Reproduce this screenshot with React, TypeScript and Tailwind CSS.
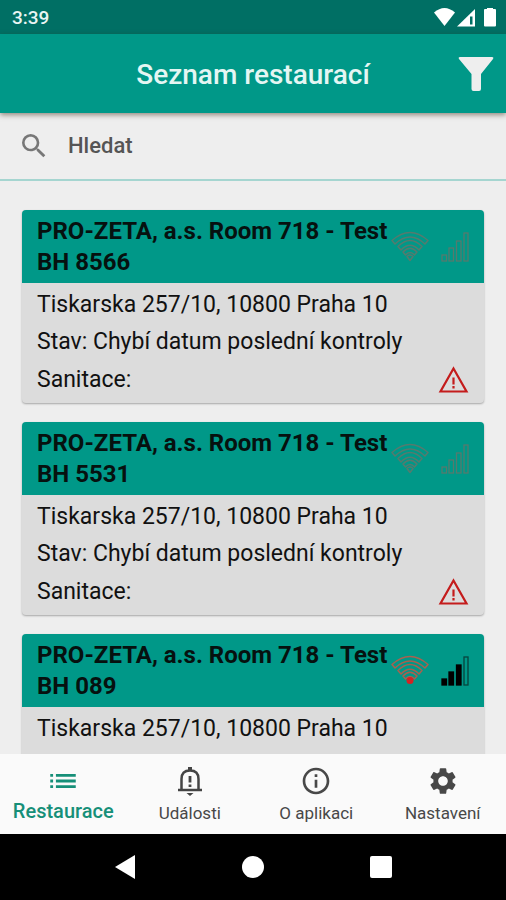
import type { ReactNode } from "react";
import { MdInfoOutline, MdList, MdSearch, MdSettings } from "react-icons/md";

type Restaurant = {
  id: string;
  name: string;
  address: string;
  status: string;
  online: boolean;
};

const restaurants: Restaurant[] = [
  { id: "8566", online: false },
  { id: "5531", online: false },
  { id: "089", online: true },
].map((r) => ({
  ...r,
  name: `PRO-ZETA, a.s. Room 718 - Test BH ${r.id}`,
  address: "Tiskarska 257/10, 10800 Praha 10",
  status: "Chybí datum poslední kontroly",
}));

function StatusBar() {
  return (
    <div className="flex h-[34px] shrink-0 items-center justify-between bg-[#006f64] pr-[9px] pl-3 text-[#e9f5f3]">
      <span className="pt-0.5 text-[19px] leading-6 font-medium">3:39</span>
      <svg width="64" height="20" viewBox="0 0 64 20" fill="#fff" aria-hidden="true">
        <path d="M1 5.500Q11.500-3.500 22 5.500L11.500 19Z" />
        <path d="M24 19.500 42 2V19.500Z" />
        <path d="M37 9.500h2.500v8H37z" fill="#006f64" />
        <path d="M54 2V1h6v1h2q1 0 1 1v15.500q0 1-1 1H52q-1 0-1-1V3q0-1 1-1z" />
      </svg>
    </div>
  );
}

function WifiIcon({ online }: { online: boolean }) {
  return (
    <svg width="38" height="32" viewBox="0 0 38 32" fill="none" stroke={online ? "#a8604f" : "#557a6e"} strokeWidth="1.5" strokeLinejoin="round" aria-hidden="true">
      <path d="M1 9.500Q19-6.500 37 9.500L34 13Q19-1 4 13Z" />
      <path d="M7 15.500Q19 3.500 31 15.500L28 19Q19 9.500 10 19Z" />
      <path d="M12 21Q19 13.500 26 21L23.500 24Q19 19 14.500 24Z" />
      {online ? (
        <circle cx="19" cy="25.500" r="3.500" fill="#d32323" stroke="none" />
      ) : (
        <path d="M16 25.500Q19 22.500 22 25.500L19 29.500Z" />
      )}
    </svg>
  );
}

function SignalIcon({ online }: { online: boolean }) {
  const line = online ? "#000" : "#557a6e";
  const fill = online ? "#000" : "none";
  return (
    <svg width="28" height="32" viewBox="0 0 28 32" stroke={line} strokeWidth="1.3" aria-hidden="true">
      <rect x="1" y="24" width="4.500" height="6" fill={fill} />
      <rect x="8" y="17" width="4.500" height="13" fill={fill} />
      <rect x="15.500" y="10" width="4.500" height="20" fill={fill} />
      <rect x="23" y="2" width="4" height="28" fill="none" stroke={online ? "#07443d" : line} />
    </svg>
  );
}

function AlertIcon() {
  return (
    <svg width="31" height="28" viewBox="0 0 31 28" fill="none" stroke="#c41c1c" strokeWidth="2.200" aria-hidden="true">
      <path d="M15.500 2.500 28.500 25.500H2.500Z" />
      <path d="M15.500 11.500v7M15.500 20v2.500" />
    </svg>
  );
}

function BellIcon() {
  return (
    <svg width="32" height="32" viewBox="0 0 32 32" fill="none" stroke="#444" aria-hidden="true">
      <path d="M7.500 25V14Q7.500 5.500 16 5.500T24.500 14V25" strokeWidth="2.500" />
      <path d="M4 25H28" strokeWidth="2.500" />
      <path d="M16 2V5" strokeWidth="4" />
      <path d="M16 11v6.500M16 19.500v2.500" strokeWidth="2.800" />
      <path d="M12.500 28H19.500L16 31Z" fill="#444" stroke="none" />
    </svg>
  );
}

function RestaurantCard({ item }: { item: Restaurant }) {
  return (
    <li className="shrink-0 overflow-hidden rounded bg-[#dcdcdc] text-[#111] shadow-[0_1px_2px_rgba(0,0,0,0.3)]">
      <div className="flex items-center bg-[#009888] px-[15px] pt-1.5 pb-[5px]">
        <h2 className="min-w-0 flex-1 text-[24px] leading-[31px] font-bold text-[#06110f]">{item.name}</h2>
        <div className="flex shrink-0 gap-3">
          <WifiIcon online={item.online} />
          <SignalIcon online={item.online} />
        </div>
      </div>
      <div className="px-[15px] pt-[3px] pb-[3px] text-[23px]">
        <p className="leading-[37px]">{item.address}</p>
        <p className="leading-[37px]">Stav: {item.status}</p>
        <div className="flex h-10 items-center justify-between">
          <span>Sanitace:</span>
          <AlertIcon />
        </div>
      </div>
    </li>
  );
}

function NavItem({ icon, label, active = false }: { icon: ReactNode; label: string; active?: boolean }) {
  return (
    <button
      type="button"
      className={
        active
          ? "flex flex-1 flex-col items-center pt-[11px] text-[20px] leading-7 font-medium text-[#168f78]"
          : "flex flex-1 flex-col items-center pt-[11px] text-[17px] leading-8 text-[#484848]"
      }
    >
      {icon}
      <span className="whitespace-nowrap">{label}</span>
    </button>
  );
}

export default function App() {
  return (
    <div className="flex h-screen flex-col bg-[#eeeeee] font-['Roboto',sans-serif]">
      <StatusBar />
      <header className="z-10 grid h-[79px] shrink-0 grid-cols-[1fr_auto_1fr] items-center bg-[#009888] px-3 pt-0.5 shadow-[0_2px_5px_rgba(60,40,20,0.5)]">
        <h1 className="col-start-2 text-[28px] leading-9 font-medium text-[#e4f6f3]">Seznam restaurací</h1>
        <button type="button" aria-label="Filtr" className="justify-self-end">
          <svg width="36" height="36" viewBox="0 0 36 36" fill="#eeeeee" aria-hidden="true">
            <path d="M2 0H34Q36 0 35 2L23 17V32Q23 34 21 34H15.500Q13.500 34 13.500 32V17L1 2Q0 0 2 0Z" />
          </svg>
        </button>
      </header>
      <label className="flex h-[68px] shrink-0 items-center gap-[18px] border-b-2 border-[#a5d5d0] px-[18px]">
        <MdSearch size={32} className="text-[#777]" aria-hidden="true" />
        <input
          type="text"
          placeholder="Hledat"
          aria-label="Hledat"
          className="min-w-0 flex-1 bg-transparent text-[22px] leading-8 font-medium outline-none placeholder:text-[#555]"
        />
      </label>
      <main className="min-h-0 flex-1 overflow-y-auto [scrollbar-width:none]">
        <ul className="flex flex-col gap-[19px] px-[22px] pt-[29px] pb-5">
          {restaurants.map((item) => (
            <RestaurantCard key={item.id} item={item} />
          ))}
        </ul>
      </main>
      <nav className="flex h-20 shrink-0 bg-[#fafafa]">
        <NavItem active icon={<MdList size={34} className="-my-px" />} label="Restaurace" />
        <NavItem icon={<BellIcon />} label="Události" />
        <NavItem icon={<MdInfoOutline size={32} />} label="O aplikaci" />
        <NavItem icon={<MdSettings size={32} />} label="Nastavení" />
      </nav>
      <div className="grid h-[66px] shrink-0 grid-cols-[1fr_auto_1fr] items-center gap-[106px] bg-black">
        <button type="button" aria-label="Zpět" className="justify-self-end">
          <svg width="22" height="24" viewBox="0 0 22 24" fill="#fff"><path d="M1 12 21 0V24Z" /></svg>
        </button>
        <button type="button" aria-label="Domů" className="size-[22px] rounded-full bg-white" />
        <button type="button" aria-label="Přehled" className="size-[22px] rounded-xs bg-white" />
      </div>
    </div>
  );
}
